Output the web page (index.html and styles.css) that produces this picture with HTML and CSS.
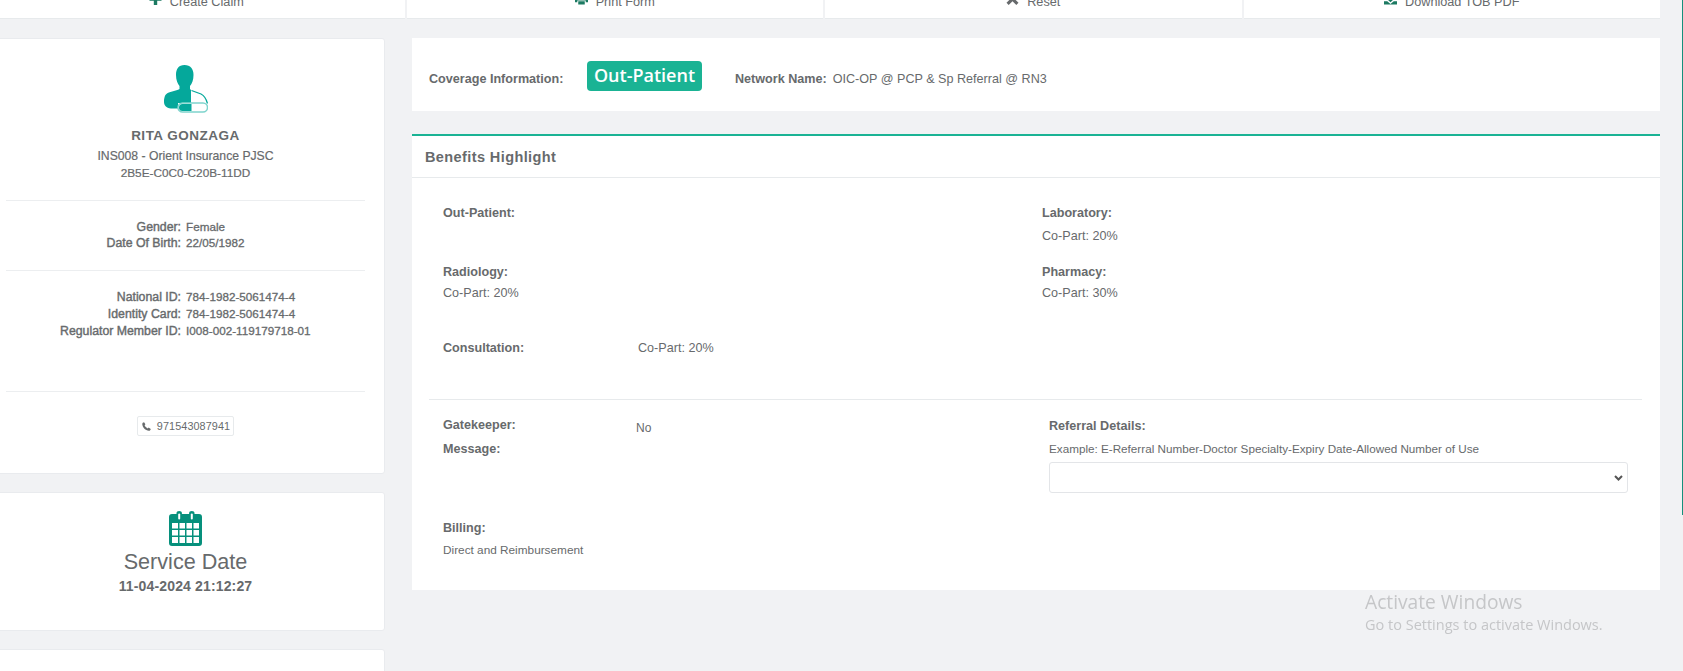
FILE: index.html
```html
<!DOCTYPE html>
<html lang="en">
<head>
<meta charset="utf-8">
<title>Benefits Highlight</title>
<link rel="stylesheet" href="styles.css">
</head>
<body>
<div class="page">
  <nav class="toolbar">
    <a class="tool"><svg class="tool-icon" viewBox="0 0 12 12"><path d="M4.300 0h3.400v4.300H12v3.400H7.700V12H4.300V7.700H0V4.300h4.300z"/></svg><span>Create Claim</span></a>
    <a class="tool"><svg class="tool-icon" viewBox="0 0 14 12"><path d="M3 0h8v3.500H3zM0 4.500h14V9.500h-2.500V7.500h-9v2H0zM3.500 8.500h7V12h-7z"/></svg><span>Print Form</span></a>
    <a class="tool"><svg class="tool-icon tool-icon-dark" viewBox="0 0 12 12"><path d="M2.200 0 6 3.800 9.800 0 12 2.200 8.200 6 12 9.800 9.800 12 6 8.200 2.200 12 0 9.800 3.800 6 0 2.200z"/></svg><span>Reset</span></a>
    <a class="tool"><svg class="tool-icon" viewBox="0 0 14 12"><path d="M4.500 0h5v4H13L7 9.500 1 4h3.500zM0 8.500h3.500L7 11.500l3.500-3H14V12H0z"/></svg><span>Download TOB PDF</span></a>
  </nav>

  <div class="columns">
    <aside class="sidebar">
      <section class="card profile">
        <svg class="patient-icon" viewBox="0 0 44 48">
          <path class="teal" d="M20.500 0C14.500 0 12 4 12 10c0 5 1.500 8.500 3.500 11v3c-3.500 2-9.500 2.500-12.500 4.500C.5 30 0 34 0 37c0 3 2 6 7 6.500h7V38h13V25l-1-1v-3c2-2.500 3.500-6 3.500-11C29.500 4 26.500 0 20.500 0z"/>
          <path class="outline" d="M27.500 25.500l9.500 3.500c3 1.500 5.500 6 6.500 9.500"/>
          <rect class="sling" x="14" y="38" width="29.500" height="9" rx="4.500"/>
          <path class="teal" d="M18.500 39H27.500V46H18.500A3.500 3.500 0 0 1 18.500 39z"/>
        </svg>
        <h2 class="patient-name">RITA GONZAGA</h2>
        <p class="patient-line patient-insurer">INS008 - Orient Insurance PJSC</p>
        <p class="patient-line patient-code">2B5E-C0C0-C20B-11DD</p>
        <hr class="rule rule-first">
        <dl class="facts facts-personal">
          <div class="fact"><dt>Gender:</dt><dd>Female</dd></div>
          <div class="fact"><dt>Date Of Birth:</dt><dd>22/05/1982</dd></div>
        </dl>
        <hr class="rule rule-second">
        <dl class="facts facts-ids">
          <div class="fact"><dt>National ID:</dt><dd>784-1982-5061474-4</dd></div>
          <div class="fact"><dt>Identity Card:</dt><dd>784-1982-5061474-4</dd></div>
          <div class="fact"><dt>Regulator Member ID:</dt><dd>I008-002-119179718-01</dd></div>
        </dl>
        <hr class="rule rule-third">
        <div class="phone-wrap">
          <span class="phone"><svg class="phone-icon" viewBox="0 0 10 10"><path d="M2.300.3 3.800 2.600 2.900 3.600C3.400 5 4.800 6.500 6.400 7.100L7.400 6.200 9.700 7.700C9.600 8.800 8.700 9.800 7.600 9.700 3.700 9.200.8 6.300.3 2.400.2 1.300 1.200.4 2.300.3z"/></svg>971543087941</span>
        </div>
      </section>

      <section class="card service">
        <svg class="calendar-icon" viewBox="0 0 33 35">
          <path class="cal-body" d="M3 3h4.500V1.800a2.700 1.800 0 0 1 5.400 0V3h7.200V1.800a2.700 1.800 0 0 1 5.400 0V3H30a3 3 0 0 1 3 3v26a3 3 0 0 1-3 3H3a3 3 0 0 1-3-3V6a3 3 0 0 1 3-3z"/>
          <rect class="cal-ring" x="9.200" y="2.500" width="2" height="6" rx="1"/>
          <rect class="cal-ring" x="21.800" y="2.500" width="2" height="6" rx="1"/>
          <g class="cal-cells">
            <rect x="3" y="12" width="6" height="5.500"/><rect x="10.500" y="12" width="5.500" height="5.500"/><rect x="17.500" y="12" width="5.500" height="5.500"/><rect x="24.500" y="12" width="5.500" height="5.500"/>
            <rect x="3" y="19" width="6" height="5.500"/><rect x="10.500" y="19" width="5.500" height="5.500"/><rect x="17.500" y="19" width="5.500" height="5.500"/><rect x="24.500" y="19" width="5.500" height="5.500"/>
            <rect x="3" y="26" width="6" height="6"/><rect x="10.500" y="26" width="5.500" height="6"/><rect x="17.500" y="26" width="5.500" height="6"/><rect x="24.500" y="26" width="5.500" height="6"/>
          </g>
        </svg>
        <h3 class="service-title">Service Date</h3>
        <p class="service-date">11-04-2024 21:12:27</p>
      </section>

      <section class="card stub"></section>
    </aside>

    <main class="content">
      <section class="coverage">
        <strong class="coverage-label coverage-text">Coverage Information:</strong>
        <span class="badge">Out-Patient</span>
        <strong class="network-label coverage-text">Network Name:</strong>
        <span class="coverage-text">OIC-OP @ PCP &amp; Sp Referral @ RN3</span>
      </section>

      <section class="benefits">
        <h3 class="benefits-title">Benefits Highlight</h3>
        <div class="benefits-body">
          <div class="benefit-grid">
            <div class="benefit benefit-top"><strong>Out-Patient:</strong></div>
            <div class="benefit benefit-top"><strong>Laboratory:</strong><span>Co-Part: 20%</span></div>
            <div class="benefit"><strong>Radiology:</strong><span>Co-Part: 20%</span></div>
            <div class="benefit"><strong>Pharmacy:</strong><span>Co-Part: 30%</span></div>
          </div>
          <div class="consultation"><strong class="consult-label">Consultation:</strong><span>Co-Part: 20%</span></div>
          <hr class="rule-wide">
          <div class="details">
            <div class="details-left">
              <div class="gatekeeper"><strong class="gate-label">Gatekeeper:</strong><span class="gate-value">No</span></div>
              <strong class="message">Message:</strong>
              <strong class="billing">Billing:</strong>
              <span class="billing-value">Direct and Reimbursement</span>
            </div>
            <div class="details-right">
              <strong class="referral">Referral Details:</strong>
              <span class="example">Example: E-Referral Number-Doctor Specialty-Expiry Date-Allowed Number of Use</span>
              <div class="select-wrap">
                <select class="referral-select" aria-label="Referral Details"><option></option></select>
                <svg class="select-chevron" viewBox="0 0 9 6"><path d="M1 1l3.500 3.500L8 1"/></svg>
              </div>
            </div>
          </div>
        </div>
      </section>
    </main>
  </div>
</div>

<div class="activate">
  <div class="activate-title">Activate Windows</div>
  <div class="activate-sub">Go to Settings to activate Windows.</div>
</div>
<div class="edge-stripe"></div>
</body>
</html>
```

FILE: styles.css
```css
* { box-sizing: border-box; }

html, body {
  margin: 0;
  height: 100%;
  overflow: hidden;
}

body {
  background: #f1f2f4;
  color: #676a6c;
  font-family: "Liberation Sans", Arial, sans-serif;
  font-size: 12.6px;
  line-height: 17px;
}

h2, h3, p, dl, dd { margin: 0; }

.page {
  width: 1672px;
  margin: -12px 0 0 -12px;
}

.toolbar {
  display: grid;
  grid-template-columns: repeat(4, 1fr);
  column-gap: 2px;
  height: 31px;
}

.tool {
  display: flex;
  align-items: center;
  justify-content: center;
  gap: 8px;
  padding-bottom: 1px;
  background: #fff;
  border-bottom: 1px solid #e7eaec;
  color: #676a6c;
  font-size: 12.700px;
}

.tool-icon {
  width: 13px;
  height: 12px;
  margin-bottom: 8px;
  fill: #1c7a62;
}

.tool-icon-dark { fill: #676a6c; }

.columns {
  display: grid;
  grid-template-columns: 397px 1248px;
  column-gap: 27px;
  margin-top: 19px;
}

.sidebar {
  display: flex;
  flex-direction: column;
  gap: 18px;
}

.card {
  background: #fff;
  border: 1px solid #e9ebee;
  border-radius: 3px;
  text-align: center;
}

.profile {
  height: 436px;
  padding: 26px 19px 0 17px;
}

.patient-icon {
  display: block;
  width: 44px;
  height: 48px;
  margin: 0 auto;
}

.teal { fill: #05a89b; }
.outline { fill: none; stroke: #05a89b; stroke-width: 1.300; }
.sling { fill: #fff; stroke: #7fd4cd; stroke-width: 1.500; }

.patient-name {
  margin-top: 14px;
  font-size: 13.500px;
  line-height: 17px;
  font-weight: 700;
  letter-spacing: 0.5px;
}

.patient-line {
  line-height: 17px;
  -webkit-text-stroke: 0.2px #676a6c;
}

.patient-insurer {
  font-size: 12.200px;
  margin-top: 4px;
}

.patient-code { font-size: 11.800px; }

.rule {
  border: 0;
  border-top: 1px solid #eceef0;
  margin: 0;
}

.rule-first { margin-top: 18px; }
.rule-second { margin-top: 19px; }
.rule-third { margin-top: 52px; }

.facts-personal { margin-top: 18px; }
.facts-ids { margin-top: 18px; }

.fact {
  display: grid;
  grid-template-columns: 175px 1fr;
  column-gap: 5px;
  align-items: baseline;
  text-align: left;
  line-height: 16px;
  font-size: 11.700px;
  -webkit-text-stroke: 0.3px #676a6c;
}

.facts-ids .fact { margin-bottom: 1px; }

.fact dt {
  text-align: right;
  font-size: 12.300px;
  -webkit-text-stroke: 0.4px #676a6c;
}

.phone-wrap {
  display: flex;
  justify-content: center;
  margin-top: 24px;
}

.phone {
  display: flex;
  align-items: center;
  gap: 6px;
  height: 20px;
  padding: 0 3px 0 4px;
  border: 1px solid #e7eaec;
  border-radius: 2px;
  font-size: 10.800px;
  letter-spacing: 0.1px;
}

.phone-icon {
  width: 9px;
  height: 9px;
  fill: #676a6c;
}

.service {
  height: 139px;
  padding: 18px 2px 0 0;
}

.calendar-icon {
  display: block;
  width: 33px;
  height: 35px;
  margin: 0 auto;
}

.cal-body { fill: #06907c; }
.cal-ring { fill: #fff; }
.cal-cells rect { fill: #fff; }

.service-title {
  font-size: 21.600px;
  line-height: 26px;
  font-weight: 400;
  margin-top: 3px;
}

.service-date {
  font-size: 14px;
  line-height: 17px;
  font-weight: 700;
  letter-spacing: 0.15px;
  margin-top: 3px;
}

.stub { height: 60px; }

.content {
  display: flex;
  flex-direction: column;
  gap: 23px;
}

.coverage {
  display: flex;
  align-items: center;
  height: 73px;
  padding: 2px 0 0 17px;
  background: #fff;
  font-size: 12.600px;
}

.coverage-text { margin-top: 8px; }

.coverage-label { width: 158px; }

.badge {
  display: flex;
  align-items: center;
  justify-content: center;
  width: 115px;
  height: 30px;
  margin-right: 33px;
  border-radius: 4px;
  background: #1ab394;
  color: #fff;
  font-family: "Open Sans", sans-serif;
  font-size: 18px;
  font-weight: 600;
}

.network-label { margin-right: 6px; }

.benefits {
  background: #fff;
  border-top: 2px solid #1ab394;
  height: 456px;
}

.benefits-title {
  height: 42px;
  padding-left: 13px;
  border-bottom: 1px solid #e7eaec;
  font-size: 14.500px;
  line-height: 42px;
  font-weight: 700;
  letter-spacing: 0.4px;
}

.benefits-body { padding: 27px 18px 0 17px; }

.benefit-grid {
  display: grid;
  grid-template-columns: 599px 1fr;
  padding-left: 14px;
  grid-auto-rows: 59px;
}

.benefit {
  display: flex;
  flex-direction: column;
  gap: 4px;
}

.benefit-top { gap: 6px; }

.consultation {
  display: flex;
  padding-left: 14px;
  margin-top: 17px;
}

.consult-label { width: 195px; }

.rule-wide {
  border: 0;
  border-top: 1px solid #e7eaec;
  margin: 42px 0 0;
}

.details {
  display: grid;
  grid-template-columns: 606px 1fr;
  padding: 17px 14px 0;
}

.details-left {
  display: flex;
  flex-direction: column;
  align-items: flex-start;
}

.gatekeeper { display: flex; }
.gate-label { width: 193px; }
.gate-value { font-size: 12px; margin-top: 3px; }

.message { margin-top: 4px; }
.billing { margin-top: 62px; }
.billing-value { font-size: 11.800px; margin-top: 5px; }

.details-right {
  display: flex;
  flex-direction: column;
  align-items: stretch;
}

.referral { margin-top: 1px; }

.example {
  font-size: 11.700px;
  margin-top: 5px;
}

.select-wrap {
  position: relative;
  margin-top: 5px;
}

.referral-select {
  display: block;
  width: 100%;
  height: 31px;
  background: #fff;
  border: 1px solid #e3e5e8;
  border-radius: 3px;
  color: #676a6c;
  appearance: none;
}

.select-chevron {
  position: absolute;
  top: 13px;
  right: 5px;
  width: 9px;
  height: 6px;
  fill: none;
  stroke: #555;
  stroke-width: 2;
  pointer-events: none;
}

.activate {
  position: fixed;
  left: 1365px;
  top: 589px;
  color: #c5c6c8;
  font-family: "Open Sans", sans-serif;
}

.activate-title { font-size: 19.200px; line-height: 26px; }
.activate-sub { font-size: 14.500px; line-height: 19px; }

.edge-stripe {
  position: fixed;
  top: 0;
  right: 0;
  width: 1px;
  height: 515px;
  background: #15907c;
}
```
